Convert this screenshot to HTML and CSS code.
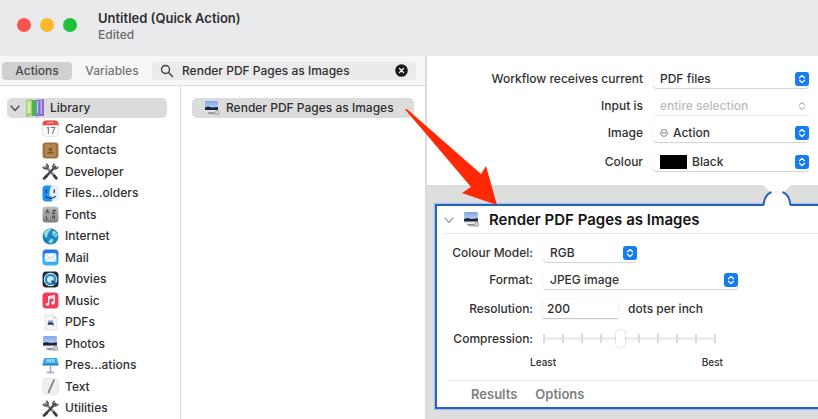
FILE: index.html
```html
<!DOCTYPE html>
<html lang="en">
<head>
<meta charset="UTF-8">
<meta name="viewport" content="width=device-width, initial-scale=1.0">
<title>Untitled (Quick Action)</title>
<link rel="stylesheet" href="styles.css">
</head>
<body>
<!-- shared icons -->
<svg class="defs" width="0" height="0" aria-hidden="true">
    <defs>
        <linearGradient id="sky" x1="0" y1="0" x2="0" y2="1">
            <stop offset="0" stop-color="#7fa9e6"/>
            <stop offset="1" stop-color="#c9def6"/>
        </linearGradient>
        <linearGradient id="steel" x1="0" y1="0" x2="0" y2="1">
            <stop offset="0" stop-color="#c4c4c4"/>
            <stop offset="1" stop-color="#7c7c7c"/>
        </linearGradient>
        <linearGradient id="mailBlue" x1="0" y1="0" x2="0" y2="1">
            <stop offset="0" stop-color="#1e6fe6"/>
            <stop offset="1" stop-color="#35b8f8"/>
        </linearGradient>
    </defs>
    <symbol id="preview" viewBox="0 0 16 16">
        <rect x="1" y="1" width="13" height="10" rx="1" fill="url(#sky)"/>
        <path d="M1 7.500l3-1 4 1 6-.6V10H1z" fill="#1c2433"/>
        <path d="M1 10h13v1.600H1z" fill="#dfe6ee"/>
        <path d="M4 12h9l2 2.500H6z" fill="#b9bcc1"/>
        <circle cx="13" cy="12.500" r="1.800" fill="#d9dbde" stroke="#8b8e94" stroke-width=".8"/>
        <path d="M4 13h6" stroke="#777b82"/>
    </symbol>
    <symbol id="tools" viewBox="0 0 16 16">
        <path d="M3.500 3.500l9.500 10" stroke="#85868c" stroke-width="2.400" stroke-linecap="round"/>
        <path d="M12.500 3.500L3 13.500" stroke="#45464e" stroke-width="2.200" stroke-linecap="round"/>
        <path d="M1 3.500a2.600 2.600 0 0 0 4.500 1A2.600 2.600 0 0 0 4 1" fill="none" stroke="#55565e" stroke-width="1.600"/>
        <path d="M12 1a2.600 2.600 0 0 0-1.500 3.500 2.600 2.600 0 0 0 4.500-1" fill="none" stroke="#55565e" stroke-width="1.600"/>
        <path d="M11.500 12l2 2.500M4.500 12l-2.500 2.500" stroke="#3c3d45" stroke-width="2.600" stroke-linecap="round"/>
    </symbol>
    <symbol id="stepper" viewBox="0 0 14 14">
        <rect width="14" height="14" rx="3" fill="#147bf5"/>
        <path d="M4.500 5.800L7 3.400l2.500 2.400M4.500 8.200L7 10.600l2.500-2.400" fill="none" stroke="#fff" stroke-width="1.300" stroke-linecap="round" stroke-linejoin="round"/>
    </symbol>
    <symbol id="stepper-off" viewBox="0 0 14 14">
        <path d="M4.500 5.800L7 3.400l2.500 2.400M4.500 8.200L7 10.600l2.500-2.400" fill="none" stroke="#bdbdbd" stroke-width="1.200" stroke-linecap="round" stroke-linejoin="round"/>
    </symbol>
    <symbol id="chevron" viewBox="0 0 10 10">
        <path d="M1 3l4 4.500L9 3" fill="none" stroke="currentColor" stroke-width="1.500" stroke-linecap="round" stroke-linejoin="round"/>
    </symbol>
</svg>

<div class="window">
    <header class="titlebar">
        <div class="lights">
            <button class="light close" aria-label="Close"></button>
            <button class="light minimise" aria-label="Minimise"></button>
            <button class="light zoom" aria-label="Zoom"></button>
        </div>
        <div class="heading">
            <h1>Untitled (Quick Action)</h1>
            <p>Edited</p>
        </div>
    </header>

    <div class="main">
        <section class="browser">
            <div class="toolbar">
                <button class="tab active">Actions</button>
                <button class="tab">Variables</button>
                <div class="search">
                    <svg width="14" height="14" viewBox="0 0 14 14" aria-hidden="true">
                        <circle cx="5.500" cy="5.500" r="4" fill="none" stroke="#3d3d3d" stroke-width="1.300"/>
                        <path d="M8.500 8.500l4 4" stroke="#3d3d3d" stroke-width="1.400" stroke-linecap="round"/>
                    </svg>
                    <input type="text" value="Render PDF Pages as Images" aria-label="Search actions">
                    <button class="clear" aria-label="Clear search">
                        <svg width="13" height="13" viewBox="0 0 13 13">
                            <circle cx="6.500" cy="6.500" r="6.300" fill="#1b1b1b"/>
                            <path d="M4.500 4.500l4 4M8.500 4.500l-4 4" stroke="#fff" stroke-width="1.200" stroke-linecap="round"/>
                        </svg>
                    </button>
                </div>
            </div>

            <div class="lists">
                <nav class="library">
                    <a class="row selected" href="#library">
                        <svg class="arrow-down" width="10" height="10"><use href="#chevron"/></svg>
                        <svg width="18" height="18" viewBox="0 0 18 18">
                            <path d="M0 1l5-1 1 1v16l-6 1z" fill="#a3cf72"/>
                            <path d="M1.500 2.500l3-.5v12l-3 .5z" fill="#d6efae"/>
                            <path d="M6 1h4v16H6z" fill="#53ae52"/>
                            <path d="M10 1l3-1v17l-3 1z" fill="#5f93dc"/>
                            <path d="M11 2h1v12h-1z" fill="#b3d0f6"/>
                            <path d="M13 1l5-1v17h-5z" fill="#9369c6"/>
                            <path d="M14.500 1.500l1.500-.5v14h-1.500z" fill="#c9b2e8"/>
                        </svg>
                        <span>Library</span>
                    </a>
                    <ul>
                        <li><a class="row" href="#calendar">
                            <svg width="17" height="17" viewBox="0 0 16 16">
                                <rect x=".5" y=".5" width="15" height="15" rx="3.500" fill="#fbfbfb" stroke="#dadada" stroke-width=".7"/>
                                <path d="M.5 5V4A3.500 3.500 0 0 1 4 .5h8A3.500 3.500 0 0 1 15.500 4v1z" fill="#f04c47"/>
                                <path d="M5 2.500h6" stroke="#f9aaa6"/>
                                <path d="M4.500 7.500L6 6.800V13M8 7h4l-2.300 6" fill="none" stroke="#77777a" stroke-width="1"/>
                            </svg><span>Calendar</span></a></li>
                        <li><a class="row" href="#contacts">
                            <svg width="17" height="17" viewBox="0 0 16 16">
                                <rect x=".5" y=".5" width="15" height="15" rx="3" fill="#a77b43"/>
                                <rect x="2" y="1.500" width="12" height="13" rx="2" fill="#b2864c" stroke="#8a6230" stroke-width=".7"/>
                                <circle cx="8" cy="6.800" r="1.500" fill="#765021"/>
                                <path d="M4.500 10.800c.5-2.300 6.500-2.300 7 0z" fill="#765021"/>
                            </svg><span>Contacts</span></a></li>
                        <li><a class="row" href="#developer"><svg width="17" height="17"><use href="#tools"/></svg><span>Developer</span></a></li>
                        <li><a class="row" href="#files">
                            <svg width="17" height="17" viewBox="0 0 16 16">
                                <rect x=".5" y=".5" width="15" height="15" rx="3.500" fill="#e6edf5"/>
                                <path d="M9 .5H4A3.500 3.500 0 0 0 .5 4v8A3.500 3.500 0 0 0 4 15.500h5.500c-.5-2-.5-3.500-.5-5H7C7 6 7.500 3 9 .5z" fill="#1c93f2"/>
                                <path d="M4 4.500V7M11.500 4.500V7" stroke="#163a66" stroke-width="1.200" stroke-linecap="round"/>
                                <path d="M3 10.500c2.500 2.800 7.500 2.800 10 0" fill="none" stroke="#163a66" stroke-width="1"/>
                            </svg><span>Files...olders</span></a></li>
                        <li><a class="row" href="#fonts">
                            <svg width="17" height="17" viewBox="0 0 16 16">
                                <rect x=".5" y=".5" width="15" height="15" rx="3" fill="url(#steel)"/>
                                <path d="M2.500 3h5v4.500h-5zM8.800 3h5v4.500h-5zM2.500 8.500h5V13h-5zM8.800 8.500h5V13h-5z" fill="#a2a2a2"/>
                                <path d="M3.800 7L5 3.800 6.200 7M10 4h2.500L10 7h2.500M4 9.500v3h2M10.200 12.500v-3h1.600v3" fill="none" stroke="#4c4c4c" stroke-width="1"/>
                            </svg><span>Fonts</span></a></li>
                        <li><a class="row" href="#internet">
                            <svg width="17" height="17" viewBox="0 0 16 16">
                                <circle cx="8" cy="8" r="7.500" fill="#1b87c4"/>
                                <path d="M2 4c2-3 5-3.500 6-3 1 1-.5 2-1.500 2.500S7 5.500 5.500 6 6 8.500 4.500 9 2 6.500 2 4zM10 3c2-.5 4 1 4.800 4-1 .5-1.500 2-3 1.500S9 5 10 3zM7 10c2-1 4 0 3.500 2S8 15 7 14s-1-3 0-4z" fill="#8fe0dc"/>
                                <path d="M2 12c3 1 8-2 12-8" fill="none" stroke="#126596" stroke-width=".7"/>
                            </svg><span>Internet</span></a></li>
                        <li><a class="row" href="#mail">
                            <svg width="17" height="17" viewBox="0 0 16 16">
                                <rect x=".5" y=".5" width="15" height="15" rx="3.500" fill="url(#mailBlue)"/>
                                <rect x="2.500" y="4" width="11" height="8" rx="1.300" fill="#f5fafe"/>
                                <path d="M3 4.800l5 4 5-4M3 11.500l3.500-3.500M13 11.500L9.500 8" fill="none" stroke="#a5cbe9" stroke-width=".8"/>
                            </svg><span>Mail</span></a></li>
                        <li><a class="row" href="#movies">
                            <svg width="17" height="17" viewBox="0 0 16 16">
                                <rect x=".5" y=".5" width="15" height="15" rx="3.500" fill="#252b33"/>
                                <circle cx="8" cy="8" r="6.300" fill="#e5eef4"/>
                                <circle cx="8" cy="8" r="4.300" fill="none" stroke="#2493d3" stroke-width="2.400"/>
                                <path d="M8.500 8.500l4.500 4.500" stroke="#1e526f" stroke-width="2"/>
                                <circle cx="7.800" cy="7.800" r="2" fill="#c3e8fa"/>
                            </svg><span>Movies</span></a></li>
                        <li><a class="row" href="#music">
                            <svg width="17" height="17" viewBox="0 0 16 16">
                                <rect x=".5" y=".5" width="15" height="15" rx="3.500" fill="#f43b57"/>
                                <path d="M6.300 11.300V4.500l5.200-1.200v6.800M6.300 6.200l5.200-1.200" fill="none" stroke="#fff" stroke-width="1.200"/>
                                <circle cx="5.100" cy="11.500" r="1.500" fill="#fff"/>
                                <circle cx="10.300" cy="10.300" r="1.500" fill="#fff"/>
                            </svg><span>Music</span></a></li>
                        <li><a class="row" href="#pdfs">
                            <svg width="17" height="17" viewBox="0 0 16 16">
                                <path d="M3 1h7.500L14 4.500V15H3z" fill="#f7f7f9" stroke="#dedee2" stroke-width=".8"/>
                                <path d="M10.500 1v3.500H14z" fill="#d3d3da"/>
                                <path d="M5.500 6h5v4h-5z" fill="#8fa5d8"/>
                                <path d="M5.500 8.500l2-.8 3 .6V10h-5z" fill="#383e5c"/>
                                <circle cx="10.500" cy="10" r="1" fill="#797c89"/>
                            </svg><span>PDFs</span></a></li>
                        <li><a class="row" href="#photos"><svg width="17" height="17"><use href="#preview"/></svg><span>Photos</span></a></li>
                        <li><a class="row" href="#presentations">
                            <svg width="17" height="17" viewBox="0 0 16 16">
                                <path d="M2 1h12l1.500 5.500H.5z" fill="#3ba7e8"/>
                                <path d="M4 2h8v3H4z" fill="#8bd0f6"/>
                                <path d="M.5 6.500h15V8H.5z" fill="#1f7fc4"/>
                                <path d="M7.300 8h1.400v6H7.300z" fill="#9aa6b3"/>
                                <ellipse cx="8" cy="14.500" rx="3.800" ry="1.100" fill="#a9b6c3"/>
                            </svg><span>Pres...ations</span></a></li>
                        <li><a class="row" href="#text">
                            <svg width="17" height="17" viewBox="0 0 16 16">
                                <rect x=".5" y=".5" width="15" height="15" rx="3" fill="#f0f0f0" stroke="#e0e0e0" stroke-width=".6"/>
                                <path d="M11.500 1.500L6 14" stroke="#75756f" stroke-width="1.700"/>
                                <path d="M12 1.500L6.700 13.500" stroke="#bdbdb8" stroke-width=".6"/>
                            </svg><span>Text</span></a></li>
                        <li><a class="row" href="#utilities"><svg width="17" height="17"><use href="#tools"/></svg><span>Utilities</span></a></li>
                    </ul>
                </nav>
                <div class="results">
                    <a class="result" href="#render">
                        <svg width="16" height="16"><use href="#preview"/></svg>
                        <span>Render PDF Pages as Images</span>
                    </a>
                </div>
            </div>
        </section>

        <section class="workflow">
            <form class="input-form">
                <div class="field">
                    <label for="receives">Workflow receives current</label>
                    <div class="popup">
                        <select id="receives"><option>PDF files</option></select>
                        <svg width="14" height="14"><use href="#stepper"/></svg>
                    </div>
                </div>
                <div class="field">
                    <label for="inputIs">Input is</label>
                    <div class="popup off">
                        <select id="inputIs" disabled><option>entire selection</option></select>
                        <svg width="14" height="14"><use href="#stepper-off"/></svg>
                    </div>
                </div>
                <div class="field">
                    <label for="image">Image</label>
                    <div class="popup">
                        <svg width="8" height="8" viewBox="0 0 8 8">
                            <circle cx="4" cy="4" r="3.400" fill="none" stroke="#777" stroke-width=".9"/>
                            <path d="M2 4h4" stroke="#777" stroke-width="1"/>
                        </svg>
                        <select id="image"><option>Action</option></select>
                        <svg width="14" height="14"><use href="#stepper"/></svg>
                    </div>
                </div>
                <div class="field tall">
                    <label for="colour">Colour</label>
                    <div class="popup">
                        <span class="swatch"></span>
                        <select id="colour"><option>Black</option></select>
                        <svg width="14" height="14"><use href="#stepper"/></svg>
                    </div>
                </div>
            </form>

            <div class="canvas">
                <form class="card">
                    <svg class="notch" width="32" height="22" viewBox="0 0 32 22" aria-hidden="true">
                        <path d="M2 0h28l-7 6.500c4.500 3 6 8 6.500 15.500h-27C3 14.500 5 9.500 9 6.500z" fill="#fff"/>
                        <path d="M2.500 20.500C3 13 5.500 9 10.500 7M29.500 20.500C29 13 26.500 9 21.500 7" fill="none" stroke="#2a60bd" stroke-width="2"/>
                        <path d="M11 6.500l5 3 5-3z" fill="#f3f3f3"/>
                    </svg>
                    <div class="card-head">
                        <svg class="fold" width="10" height="10"><use href="#chevron"/></svg>
                        <svg width="17" height="17"><use href="#preview"/></svg>
                        <h2>Render PDF Pages as Images</h2>
                    </div>
                    <div class="options">
                        <label for="model">Colour Model:</label>
                        <div class="popup small">
                            <select id="model"><option>RGB</option></select>
                            <svg width="14" height="14"><use href="#stepper"/></svg>
                        </div>
                        <label for="format">Format:</label>
                        <div class="popup wide">
                            <select id="format"><option>JPEG image</option></select>
                            <svg width="14" height="14"><use href="#stepper"/></svg>
                        </div>
                        <label for="resolution">Resolution:</label>
                        <div class="resolution">
                            <input type="text" id="resolution" value="200">
                            <span>dots per inch</span>
                        </div>
                        <label for="compression">Compression:</label>
                        <input type="range" id="compression" min="0" max="9" value="4">
                        <div class="scale"><span>Least</span><span>Best</span></div>
                    </div>
                    <div class="card-foot">
                        <button type="button">Results</button>
                        <button type="button">Options</button>
                    </div>
                </form>
            </div>
        </section>
    </div>

    <svg class="pointer" width="94" height="98" viewBox="0 0 94 98" aria-hidden="true">
        <path d="M1 1.500Q2 .5 4 2L77 66l5-8 11 39-35-12 9-6L17 20z" fill="#ff2a05"/>
    </svg>
</div>
</body>
</html>
```

FILE: styles.css
```css
* {
    box-sizing: border-box;
}
body {
    margin: 0;
    font-family: Inter, "Liberation Sans", sans-serif;
    font-size: 12px;
    font-weight: 500;
    line-height: 18px;
    color: #303030;
    background-color: #fff;
}
h1, h2, p, ul {
    margin: 0;
    padding: 0;
}
ul {
    list-style: none;
}
a {
    color: inherit;
    text-decoration: none;
}
button, input, select {
    font: inherit;
    color: inherit;
    border: 0;
    padding: 0;
    margin: 0;
    background: none;
}
svg {
    flex: none;
}
.defs {
    position: absolute;
}
.window {
    position: relative;
    display: flex;
    flex-direction: column;
    height: 100vh;
    min-height: 419px;
    overflow: hidden;
}

/* title bar */
.titlebar {
    display: flex;
    gap: 21px;
    height: 56px;
    padding: 9px 17px;
    background-color: #e9eaec;
}
.lights {
    display: flex;
    gap: 9px;
    padding-top: 9px;
}
.light {
    width: 14px;
    height: 14px;
    border-radius: 50%;
}
.close { background-color: #f9544f; }
.minimise { background-color: #fcb72b; }
.zoom { background-color: #1fc138; }
.heading h1 {
    font-size: 13px;
    font-weight: 600;
    line-height: 18px;
}
.heading p {
    line-height: 16px;
    color: #6b6b6b;
}

.main {
    display: flex;
    flex: 1;
    min-height: 0;
}

/* left side */
.browser {
    display: flex;
    flex-direction: column;
    flex: 0 0 427px;
    border-right: 2px solid #dcdcdd;
}
.toolbar {
    display: flex;
    align-items: center;
    height: 30px;
    padding: 0 9px 0 2px;
    background-color: #f6f6f7;
    border-bottom: 1px solid #dfdfdf;
}
.tab {
    width: 70px;
    height: 18px;
    border-radius: 4px;
    color: #757575;
}
.tab + .tab {
    width: 80px;
}
.tab.active {
    background-color: #d0d0d1;
    color: #484848;
}
.search {
    display: flex;
    align-items: center;
    flex: 1;
    gap: 8px;
    height: 18px;
    padding: 0 8px;
    border-radius: 4px;
    background-color: #ebebec;
}
.search input {
    flex: 1;
    min-width: 0;
    outline: none;
}
.clear {
    display: flex;
}
.lists {
    display: flex;
    flex: 1;
    min-height: 0;
}
.library {
    display: flex;
    flex-direction: column;
    flex: 0 0 181px;
    padding: 12px 13px 0 7px;
    border-right: 1px solid #dcdcdc;
}
.library ul {
    display: grid;
    flex: 1;
    grid-auto-rows: 1fr;
    padding-left: 35px;
}
.row {
    display: flex;
    align-items: center;
    gap: 6px;
    height: 100%;
}
.row.selected {
    height: 20px;
    padding-left: 3px;
    border-radius: 5px;
    background-color: #dcdcdd;
}
.arrow-down {
    color: #555;
}
.results {
    flex: 1;
    padding: 12px 11px;
}
.result {
    display: flex;
    align-items: center;
    gap: 6px;
    height: 20px;
    padding-left: 12px;
    border-radius: 5px;
    background-color: #dcdcdd;
}

/* right side */
.workflow {
    display: flex;
    flex-direction: column;
    flex: 1;
    min-width: 0;
}
.input-form {
    padding: 9px 9px 8px 0;
}
.field {
    display: flex;
    align-items: center;
    justify-content: flex-end;
    gap: 10px;
    height: 27px;
}
.field.tall {
    height: 31px;
}
.popup {
    display: flex;
    align-items: center;
    gap: 5px;
    width: 156px;
    height: 19px;
    padding-left: 7px;
    border-radius: 4px;
    background-color: #fff;
    box-shadow: 0 1px 1px #d2d2d2, 0 0 1px #e4e4e4;
}
.popup select {
    flex: 1;
    min-width: 0;
    height: 100%;
    appearance: none;
    outline: none;
}
.popup.off select {
    color: #bcbcbc;
    opacity: 1;
}
.popup.off {
    box-shadow: 0 1px 1px #e8e8e8;
}
.popup.small {
    width: 94px;
}
.popup.wide {
    width: 195px;
}
.swatch {
    width: 27px;
    height: 14px;
    background-color: #000;
}
.canvas {
    flex: 1;
    padding: 19px 0 10px 8px;
    background-color: #dedede;
}
.card {
    position: relative;
    border: 2px solid #2a60bd;
    border-right: 0;
    background-color: #fff;
    box-shadow: 0 0 1px 1px #a9c4ee;
}
.notch {
    position: absolute;
    right: 25px;
    top: -21px;
}
.card-head {
    display: flex;
    align-items: center;
    height: 28px;
    gap: 9px;
    margin-left: 7px;
    border-bottom: 1px solid #e6e6e6;
}
.card-head h2 {
    font-size: 15px;
    font-weight: 600;
    color: #151515;
}
.fold {
    color: #aaa;
}
.options {
    display: grid;
    grid-template-columns: 96px 1fr;
    column-gap: 10px;
    grid-template-rows: 27px 27px 31px 29px 18px;
    align-items: center;
    padding: 5px 0 9px;
}
.options label {
    text-align: right;
}
.resolution {
    display: flex;
    align-items: center;
    gap: 10px;
}
.resolution input {
    width: 75px;
    height: 19px;
    padding-left: 4px;
    outline: none;
    box-shadow: 0 1px 1px #c8c8c8, 0 0 1px #e0e0e0;
}
.options input[type="range"] {
    width: 173px;
    height: 16px;
    appearance: none;
    outline: none;
    background:
        repeating-linear-gradient(to right, #dadada 0 2px, transparent 2px 19px) center / 100% 9px no-repeat,
        linear-gradient(#eee, #eee) center / 100% 3px no-repeat;
}
.options input[type="range"]::-webkit-slider-thumb {
    appearance: none;
    width: 9px;
    height: 17px;
    border-radius: 4px;
    background-color: #fff;
    box-shadow: 0 0 2px #aaa;
}
.scale {
    grid-column: 2;
    display: flex;
    justify-content: space-between;
    width: 193px;
    margin-left: -13px;
    font-size: 10px;
}
.card-foot {
    display: flex;
    gap: 18px;
    height: 27px;
    margin-left: 10px;
    padding-left: 24px;
    border-top: 1px solid #e2e2e2;
}
.card-foot button {
    font-size: 13px;
    font-weight: 600;
    color: #808080;
}

/* red arrow from the result to the action */
.pointer {
    position: absolute;
    left: 404px;
    top: 108px;
}
```
